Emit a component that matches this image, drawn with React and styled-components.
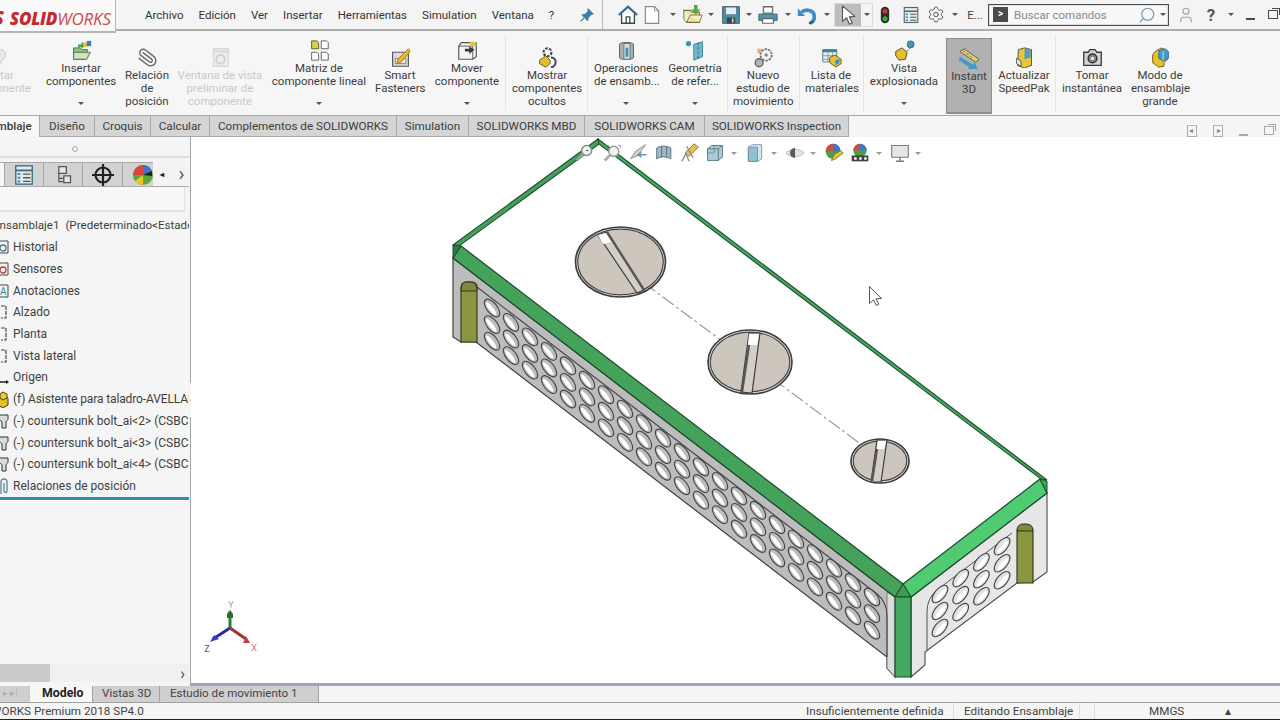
import React from 'react'
import styled, { createGlobalStyle } from 'styled-components'
import { Settings, Search, Paperclip, User } from 'lucide-react'

const GlobalStyle = createGlobalStyle`
  html, body {
    margin: 0;
    width: 1280px;
    height: 720px;
    overflow: hidden;
    background: #f5f5f5;
  }
  body {
    font-family: Roboto, "Liberation Sans", sans-serif;
    color: #3a3a3a;
  }
`

const Page = styled.div`
  width: 1280px;
  height: 720px;
  display: flex;
  flex-direction: column;
  overflow: hidden;
`

/* ---------- icons ---------- */

const Svg = ({ size = 24, children }) => (
  <svg width={size} height={size} viewBox="0 0 24 24" fill="none">{children}</svg>
)

const HomeIcon = () => (
  <Svg>
    <path d="M2 12 12 3l10 9" stroke="#2f6f8c" strokeWidth="2.4" />
    <path d="M5 11v10h14V11" stroke="#3a4a50" strokeWidth="1.5" fill="#fff" />
    <path d="M10 21v-7h4v7" stroke="#3a4a50" strokeWidth="1.4" />
  </Svg>
)
const DocIcon = () => (
  <Svg>
    <path d="M4 2h11l5 5v15H4z" fill="#fff" stroke="#8a8a8a" strokeWidth="1.4" />
    <path d="M15 2v5h5" stroke="#8a8a8a" />
  </Svg>
)
const OpenIcon = () => (
  <Svg>
    <path d="M2 7h7l2 2h8v11H5z" fill="#f0e2a6" stroke="#77704a" strokeWidth="1.2" />
    <path d="M2 7v10l3 3 4-8h13l-3 8" fill="#f7eec4" stroke="#77704a" />
    <path d="M13 1h4v5h3l-5 6-5-6h3z" fill="#57a845" />
  </Svg>
)
const SaveIcon = () => (
  <Svg>
    <path d="M2 2h20v20H2z" fill="#4f8ea3" stroke="#3f5f6c" strokeWidth="1.2" />
    <path d="M6 3h12v8H6z" fill="#e8eef0" />
    <path d="M7 15h10v7H7z" fill="#39474d" />
    <path d="M13 16h2v5h-2z" fill="#cfd8dc" />
  </Svg>
)
const PrintIcon = () => (
  <Svg>
    <path d="M7 3h10v7H7z" fill="#fff" stroke="#6a6a6a" strokeWidth="1.4" />
    <path d="M2 11h20v7H2z" fill="#4f97ad" stroke="#3f6070" />
    <path d="M6 16h12v5H6z" fill="#fff" stroke="#6a6a6a" strokeWidth="1.3" />
  </Svg>
)
const UndoIcon = () => (
  <Svg>
    <path d="M2 5v8h8z" fill="#3c8fc0" />
    <path d="M6 9c4-4 14-3 14 5 0 3-2 6-5 7" stroke="#3c8fc0" strokeWidth="4" />
    <path d="M14 21c2 0 4-1 5-3" stroke="#2b4f63" strokeWidth="1.4" />
  </Svg>
)
const ArrowIcon = ({ size = 22 }) => (
  <Svg size={size}>
    <path d="M6 2v17l4.5-4 3 7 3-1.3-3-6.7 6-.5z" fill="#fff" stroke="#555" strokeWidth="1.2" strokeLinejoin="round" />
  </Svg>
)
const TrafficIcon = () => (
  <svg width="10" height="20" viewBox="0 0 12 24">
    <rect x="1" y="2" width="10" height="20" rx="5" fill="#2a2a2a" />
    <circle cx="6" cy="7.5" r="3" fill="#d3302a" />
    <circle cx="6" cy="16.5" r="3" fill="#3eaa3a" />
  </svg>
)
const ListBoxIcon = ({ size = 20, color = '#4c6a74' }) => (
  <Svg size={size}>
    <rect x="3" y="2" width="18" height="20" fill="#e4e8ea" stroke={color} strokeWidth="1.5" />
    <path d="M3 7h18" stroke={color} strokeWidth="2" />
    <path d="M11 11h8M11 15h8M11 19h8" stroke="#555" strokeWidth="1.4" />
    <path d="M5 11h3M5 15h3M5 19h3" stroke="#3a93b8" strokeWidth="2.2" />
  </Svg>
)

const EditIcon = () => (
  <Svg>
    <path d="M6 20c-3-6 0-17 7-17 6 0 7 7 4 10-2 2-3 2-4 5s-5 5-7 2z" fill="#ececec" stroke="#d2d2d2" strokeWidth="1.5" />
    <path d="M9 10c1-3 5-3 5 0" stroke="#d8d8d8" strokeWidth="1.5" />
  </Svg>
)
const InsertIcon = () => (
  <Svg>
    <path d="M3 9h7l2 2h7l-3 11H3z" fill="#8fc48a" stroke="#44683f" />
    <path d="M3 14 22 14l-4 8H3z" fill="#cfe3bf" stroke="#44683f" />
    <path d="M8 9V5h4V2l5 4-5 4V8" fill="#46a24a" />
    <path d="M14 3h5v5h-5z" fill="#e3c23c" />
    <path d="M18 1h5v6h-5z" fill="#3d7fb1" />
  </Svg>
)
const ClipIcon = styled(Paperclip).attrs({ size: 24, color: '#6b6b6b', strokeWidth: 1.7 })`
  transform: scaleX(-1) rotate(8deg);
`
const PreviewIcon = () => (
  <Svg>
    <path d="M4 2h17v20H4z" fill="#ededed" stroke="#dadada" strokeWidth="1.5" />
    <path d="M4 5h17" stroke="#d4d4d4" strokeWidth="2" />
    <circle cx="12" cy="14" r="5" stroke="#cfcfcf" strokeWidth="2" />
  </Svg>
)
const PatternIcon = () => (
  <Svg>
    <path d="M3 1h6l2 2v7H3z" fill="#d9d24a" stroke="#4f4f2a" />
    <path d="M14 1h6l2 2v7h-8z" fill="#fff" stroke="#555" />
    <path d="M3 14h6l2 2v7H3z" fill="#fff" stroke="#555" />
    <path d="M14 14h6l2 2v7h-8z" fill="#fff" stroke="#555" />
  </Svg>
)
const FastenerIcon = () => (
  <Svg>
    <path d="M3 6h18v16H3z" fill="#ddd" stroke="#555" strokeWidth="1.3" />
    <path d="M6 19h12v-6H6z" fill="#f4f4f4" stroke="#777" />
    <path d="M21 2 9 14l-1 5 5-2L23 5z" fill="#eab92e" stroke="#94721a" />
  </Svg>
)
const MoveIcon = () => (
  <Svg>
    <path d="M5 3h17v16l-4 3H2V7z" fill="#f4f4f4" stroke="#555" strokeWidth="1.3" />
    <path d="M2 7h16v15" stroke="#555" />
    <path d="M9 10h5V7l6 4-6 5v-3H9z" fill="#3a3a3a" />
    <path d="M15 2h7v5h-7z" fill="#e9c23a" />
  </Svg>
)
const HiddenIcon = () => (
  <Svg>
    <circle cx="12" cy="6" r="4.5" stroke="#444" strokeWidth="2.4" strokeDasharray="3 1.5" />
    <path d="M3 15l7-5 5 5v4l-5 4-7-4z" fill="#e4bb30" stroke="#6a5311" />
    <path d="M16 12c4 0 6 3 5 7s-4 4-5 4" stroke="#444" strokeWidth="2.2" />
  </Svg>
)
const AssemblyOpsIcon = () => (
  <Svg>
    <path d="M4 5c0-3 16-3 16 0v15c0 3-16 3-16 0z" fill="#a8b0b4" stroke="#555" />
    <path d="M9 4h7v18H9z" fill="#d5dadc" stroke="#4d7d92" />
    <path d="M11 9h3v10h-3z" fill="#3d8db0" />
  </Svg>
)
const RefGeomIcon = () => (
  <Svg>
    <circle cx="4" cy="4" r="3" fill="#3b93b6" />
    <path d="M10 5l10-3v17l-10 4z" fill="#6fb9cf" stroke="#3a7f98" />
    <path d="M15 3v19" stroke="#2c5d70" strokeDasharray="3 2" />
  </Svg>
)
const StudyIcon = () => (
  <Svg>
    <circle cx="15" cy="9" r="6.5" fill="#f4f4f4" stroke="#777" strokeWidth="2" strokeDasharray="3 1" />
    <circle cx="15" cy="9" r="2" fill="#888" />
    <circle cx="7" cy="18" r="4.5" fill="#b4b4b4" stroke="#666" strokeWidth="1.6" />
    <path d="M5 2h5v5H5z" fill="#d3b36a" />
  </Svg>
)
const BomIcon = () => (
  <Svg>
    <path d="M2 3h16v14H2z" fill="#eef2f4" stroke="#4f6f7c" />
    <path d="M2 3h16v3H2z" fill="#3f7f9f" />
    <path d="M2 10h16M2 14h16M8 6v11M13 6v11" stroke="#7a8f99" />
    <path d="M10 12l6-3 7 5v5l-6 4-7-5z" fill="#e7c132" stroke="#6a5511" />
    <path d="M16 16l5-3v5l-4 3z" fill="#3d91c0" />
  </Svg>
)
const ExplodeIcon = () => (
  <Svg>
    <path d="M2 13l7-4 6 5-2 8-7 1-4-5z" fill="#e7bf2e" stroke="#4a3c10" />
    <circle cx="19" cy="5" r="4" fill="#4d94b4" stroke="#33667d" />
    <path d="M15 13l3-4" stroke="#555" strokeDasharray="2 1" />
  </Svg>
)
const InstantIcon = () => (
  <Svg>
    <path d="M1 4l5-3 17 12-4 3z" fill="#e6d46a" stroke="#555" />
    <path d="M5 3l2 2M9 6l2 2M13 9l2 2" stroke="#444" />
    <path d="M1 10l15 9 2-3 3 8H10l2-2L0 14z" fill="#3f9ac6" />
  </Svg>
)
const SpeedPakIcon = () => (
  <Svg>
    <path d="M5 3l7-2 8 2v18l-8 3-8-3z" fill="#e9c53a" stroke="#444" />
    <path d="M12 2l7 2v8l-7 2z" fill="#4d9cc4" />
    <path d="M3 13l5 3v6l-5-3z" fill="#fff" stroke="#444" />
    <path d="M5 17h1" stroke="#333" />
  </Svg>
)
const CameraIcon = () => (
  <Svg>
    <path d="M2 6h5l2-3h6l2 3h5v15H2z" fill="#d4d4d4" stroke="#3b3b3b" strokeWidth="1.5" />
    <circle cx="12" cy="13" r="5" fill="#888" stroke="#2f2f2f" strokeWidth="1.6" />
    <circle cx="12" cy="13" r="1.8" fill="#f0f0f0" />
  </Svg>
)
const LargeAsmIcon = () => (
  <Svg>
    <path d="M6 5l7-4 7 4v9l-4 4v4l-6 1-7-5V9z" fill="#e5c22f" stroke="#6a5612" />
    <path d="M10 4l7-2 4 3v8l-6 3-5-3z" fill="#4a9cc6" stroke="#2f6d8a" />
    <path d="M15 5v10" stroke="#c9e3ef" />
  </Svg>
)

const TreeIcon = styled.svg`
  width: 12px;
  height: 18px;
  flex: none;
`
const TreeBox = ({ color = '#4d7a88', letter }) => (
  <TreeIcon viewBox="0 0 12 18">
    <path d="M-2 3h10v12H-2z" fill="#f2f2f2" stroke="#4a4a4a" />
    {letter
      ? <text x="0" y="13" fontSize="10" fill={color}>{letter}</text>
      : <circle cx="3" cy="10" r="3" stroke={color} fill="none" strokeWidth="1.3" />}
  </TreeIcon>
)
const TreePlane = () => (
  <TreeIcon viewBox="0 0 12 18">
    <path d="M1 3h5v12H1" fill="none" stroke="#4a4a4a" strokeWidth="1.2" strokeDasharray="4 1" />
  </TreeIcon>
)
const TreeOrigin = () => (
  <TreeIcon viewBox="0 0 12 18">
    <path d="M0 14h7" stroke="#111" strokeWidth="1.4" />
    <path d="M6 12l3 2-3 2z" fill="#111" />
  </TreeIcon>
)
const TreeBlocks = () => (
  <TreeIcon viewBox="0 0 12 18">
    <path d="M-2 8l5-3 5 3v7l-5 3-5-3z" fill="#e3bd2c" stroke="#4a3c10" />
    <path d="M3 2l4 2v4l-4 2-3-2V4z" fill="#ecc93a" stroke="#4a3c10" />
  </TreeIcon>
)
const TreeBolt = () => (
  <TreeIcon viewBox="0 0 12 18">
    <path d="M-3 3h11v4c0 1-2 2-2 3v6H2v-6C2 9 0 8-3 7z" fill="#dcdcdc" stroke="#333" />
  </TreeIcon>
)
const TreeClip = () => (
  <TreeIcon viewBox="0 0 12 18">
    <path d="M1 17V5c0-4 6-4 6 0v9c0 2-3 2-3 0V6" fill="none" stroke="#5d8fa6" strokeWidth="1.4" />
  </TreeIcon>
)

const HudZoom = () => (
  <Svg size={20}>
    <circle cx="14" cy="9" r="6" stroke="#8a8a8a" strokeWidth="1.8" fill="#eef3f4" />
    <path d="M10 13 2 21" stroke="#8aa39b" strokeWidth="3.4" />
    <path d="M13 9h3" stroke="#666" strokeWidth="1.5" />
  </Svg>
)
const HudArea = () => (
  <Svg size={20}>
    <circle cx="13" cy="10" r="6" stroke="#9a9a9a" strokeWidth="1.8" fill="#f1f4f5" />
    <path d="M9 14 2 21" stroke="#a4b2ad" strokeWidth="3.4" />
    <path d="M3 3h4M18 3h3v3" stroke="#888" />
  </Svg>
)
const HudPrev = () => (
  <Svg size={20}>
    <path d="M21 2 9 10l-6 9 9-4z" fill="#cfd4d2" stroke="#888" />
    <path d="M22 14H12l4-3M12 14l4 3" stroke="#5a97b5" strokeWidth="1.7" />
  </Svg>
)
const HudSection = () => (
  <Svg size={20}>
    <path d="M2 6c4-3 12-3 17 0v13c-5-3-13-3-17 0z" fill="#9fb8c1" stroke="#4d6670" />
    <path d="M8 4v13M14 4v13" stroke="#4d6670" />
  </Svg>
)
const HudPencil = () => (
  <Svg size={20}>
    <path d="M17 1l5 4-11 11-5-4z" fill="#e4c24a" stroke="#7b6a2a" />
    <path d="M2 22l5-9 4 9M8 4l8 14" stroke="#8a8a8a" strokeWidth="1.5" />
  </Svg>
)
const HudCube = () => (
  <Svg size={20}>
    <path d="M3 7l5-4h13v14l-5 4H3z" fill="#a9cad6" stroke="#50707c" />
    <path d="M3 7h13v14M16 7l5-4" stroke="#50707c" />
    <path d="M11 3v9H3" stroke="#50707c" strokeDasharray="2 1" />
  </Svg>
)
const HudDisplay = () => (
  <Svg size={20}>
    <path d="M4 5l5-3h11v17l-5 3H4z" fill="#d6e8ee" stroke="#6a8c98" />
    <path d="M4 5h11v17H4z" fill="#8fc0d1" stroke="#6a8c98" />
  </Svg>
)
const HudEye = () => (
  <Svg size={20}>
    <path d="M1 12c5-6 17-6 22 0-5 6-17 6-22 0z" fill="#e2e2e2" stroke="#b5b5b5" />
    <path d="M12 6a6 6 0 0 0 0 12z" fill="#5a5a5a" />
  </Svg>
)
const HudBall = () => (
  <Svg size={20}>
    <circle cx="11" cy="10" r="9" fill="#4aa04a" />
    <path d="M11 10V1a9 9 0 0 0-9 9z" fill="#d14c42" />
    <path d="M11 10V1a9 9 0 0 1 9 9z" fill="#3d75c8" />
    <path d="M9 21l3-7 8-5 3 3-9 7z" fill="#e5c33a" stroke="#7b6a2a" />
  </Svg>
)
const HudScene = () => (
  <Svg size={20}>
    <circle cx="12" cy="9" r="8" fill="#4aa04a" />
    <path d="M12 9V1a8 8 0 0 0-8 8z" fill="#d14c42" />
    <path d="M12 9V1a8 8 0 0 1 8 8z" fill="#3d75c8" />
    <path d="M2 15h20v7H2z" fill="#3f3f3f" />
    <path d="M5 17h3v3H5zM11 17h3v3h-3zM17 17h3v3h-3z" fill="#fff" />
  </Svg>
)
const HudMonitor = () => (
  <Svg size={20}>
    <path d="M2 3h20v14H2z" fill="#e6e6e6" stroke="#7b7b7b" strokeWidth="1.3" />
    <path d="M12 17v4M7 22h10" stroke="#7b7b7b" strokeWidth="1.8" />
  </Svg>
)

const ColorBallIcon = () => (
  <svg width="22" height="22" viewBox="0 0 22 22">
    <circle cx="11" cy="11" r="10" fill="#5aa53c" />
    <path d="M11 11V1a10 10 0 0 0-10 10z" fill="#d9453a" />
    <path d="M11 11V1a10 10 0 0 1 9 6z" fill="#3f74c6" />
    <path d="M11 11 3 17a10 10 0 0 0 8 4z" fill="#e8c52f" />
    <path d="M11 11l9-4v5z" fill="#222" />
  </svg>
)
const TreeTabIcon = () => (
  <Svg size={20}>
    <path d="M7 2h9v8H7zM13 13h8v8h-8z" stroke="#555" strokeWidth="1.5" fill="#e8e8e8" />
    <path d="M7 10v10h6M7 16h6" stroke="#555" strokeWidth="1.5" />
  </Svg>
)
const CrosshairIcon = () => (
  <Svg>
    <circle cx="12" cy="12" r="7.5" stroke="#222" strokeWidth="2.2" />
    <path d="M12 1v22M1 12h22" stroke="#222" strokeWidth="2.2" />
  </Svg>
)

/* ---------- title bar ---------- */

const TitleBar = styled.header`
  display: flex;
  align-items: center;
  height: 29px;
  flex: none;
  border-bottom: 2px solid #adadad;
  background: #f4f4f4;
  position: relative;
  z-index: 2;
`
const Logo = styled.div`
  width: 116px;
  height: 33px;
  margin-bottom: -4px;
  box-sizing: border-box;
  flex: none;
  padding: 7px 0 0 0;
  background: #fafafa;
  border-right: 1px solid #b5b5b5;
  border-bottom: 2px solid #b5b5b5;
  white-space: nowrap;
  overflow: hidden;
  font-family: "Open Sans", sans-serif;
  font-size: 17px;
  font-style: italic;
  color: #c5282f;
  letter-spacing: -0.2px;
  b { font-weight: 800; margin-left: 6px; }
  span { font-weight: 400; color: #cf4a4f; }
  i { font-weight: 800; font-size: 20px; margin-left: -7px; line-height: 0; }
`
const Menu = styled.nav`
  display: flex;
  gap: 15px;
  margin-left: 29px;
  font-size: 11.5px;
  color: #333;
  white-space: nowrap;
`
const Pin = styled.svg`
  width: 14px;
  height: 14px;
  margin-left: 26px;
`
const Toolbar = styled.div`
  display: flex;
  align-items: center;
  margin-left: auto;
  width: 678px;
  height: 29px;
  box-sizing: border-box;
  border-left: 1px solid #b9b9b9;
`
const ToolBtn = styled.div`
  width: ${p => p.$w}px;
  margin-left: ${p => p.$ml}px;
  flex: none;
  display: flex;
  justify-content: center;
  align-items: center;
  svg { flex: none; max-width: ${p => p.$w}px; }
`
const Caret = styled.i`
  width: 0;
  height: 0;
  flex: none;
  margin-left: ${p => p.$ml}px;
  margin-right: 1px;
  border-left: 3px solid transparent;
  border-right: 3px solid transparent;
  border-top: 3px solid ${p => p.$color || '#555'};
`
const SelectGroup = styled.div`
  display: flex;
  align-items: center;
  height: 24px;
  width: 39px;
  margin-left: 3px;
  flex: none;
  border: 1px solid #dcdcdc;
  box-sizing: border-box;
`
const SelectActive = styled.div`
  width: 26px;
  height: 100%;
  background: #bdbdbd;
  display: flex;
  align-items: center;
  justify-content: center;
`
const SmallLabel = styled.span`
  font-size: 11.5px;
  color: #444;
`
const SearchBox = styled.div`
  width: 181px;
  height: 22px;
  margin-left: 5px;
  flex: none;
  box-sizing: border-box;
  border: 1px solid #4d4d4d;
  box-shadow: inset 0 0 0 1px #ddd;
  background: #f8f8f8;
  display: flex;
  align-items: center;
  padding: 0 1px 0 3px;
  font-size: 11.5px;
  color: #8a8a8a;
`
const PromptIcon = styled.span`
  width: 15px;
  height: 15px;
  background: #4b4b4b;
  color: #fff;
  font-size: 10px;
  font-weight: 700;
  line-height: 14px;
  text-align: center;
  margin-right: 6px;
  margin-left: 1px;
`
const HelpMark = styled.span`
  font-size: 17px;
  font-weight: 700;
  color: #555;
`
const MinBar = styled.span`
  width: 9px;
  height: 2px;
  margin-top: 8px;
  background: ${p => p.$color || '#4a4a4a'};
`
const Restore = styled.span`
  width: 8px;
  height: 7px;
  border: 1px solid ${p => p.$color || '#4a4a4a'};
  box-shadow: 2px -2px 0 -1px #f4f4f4, 3px -3px 0 -1px ${p => p.$color || '#4a4a4a'};
`

/* ---------- ribbon ---------- */

const RibbonBand = styled.div`
  flex: none;
  height: 85px;
  background: #f6f6f6;
  border-bottom: 1px solid #a8a8a8;
  box-sizing: border-box;
`
const Ribbon = styled.section`
  display: flex;
  height: 84px;
  margin-left: -35px;
  font-size: 11.5px;
  line-height: 13px;
  color: #3c3c3c;
`
const RibbonBtn = styled.div`
  width: ${p => p.$w}px;
  margin-left: ${p => p.$ml || 0}px;
  flex: none;
  box-sizing: border-box;
  text-align: center;
  padding-top: ${p => (p.$drop ? 6 : 13)}px;
  color: ${p => (p.$off ? '#c9c9c9' : 'inherit')};
  white-space: nowrap;
  ${p => p.$active && `
    margin-top: 7px;
    height: 76px;
    padding-top: 6px;
    background: #b1b1b1;
    border: 1px solid #8e8e8e;
    border-bottom-width: 2px;
  `}
`
const RibbonIcon = styled.div`
  height: 25px;
  padding-bottom: 1px;
  box-sizing: border-box;
  display: flex;
  justify-content: center;
  align-items: flex-end;
  svg { flex: none; width: 21px; height: 21px; }
`
const DropMark = styled.div`
  display: flex;
  justify-content: center;
  margin-top: 14px;
`
const RibbonSep = styled.div`
  width: 1px;
  height: 76px;
  margin: 4px 0 0 ${p => p.$ml}px;
  background: #e6e6e6;
  flex: none;
`

const ribbon = [
  { icon: <EditIcon />, lines: ['Editar', 'componente'], w: 68, off: true },
  { icon: <InsertIcon />, lines: ['Insertar', 'componentes'], w: 70, ml: 13, drop: true },
  { icon: <ClipIcon />, lines: ['Relación', 'de', 'posición'], w: 44, ml: 9 },
  { icon: <PreviewIcon />, lines: ['Ventana de vista', 'preliminar de', 'componente'], w: 88, ml: 7, off: true },
  { icon: <PatternIcon />, lines: ['Matriz de', 'componente lineal'], w: 96, ml: 7, drop: true },
  { icon: <FastenerIcon />, lines: ['Smart', 'Fasteners'], w: 50, ml: 8 },
  { icon: <MoveIcon />, lines: ['Mover', 'componente'], w: 66, ml: 9, drop: true },
  { sep: 5 },
  { icon: <HiddenIcon />, lines: ['Mostrar', 'componentes', 'ocultos'], w: 70, ml: 6 },
  { sep: 5 },
  { icon: <AssemblyOpsIcon />, lines: ['Operaciones', 'de ensamb...'], w: 64, ml: 6, drop: true },
  { icon: <RefGeomIcon />, lines: ['Geometría', 'de refer...'], w: 54, ml: 10, drop: true },
  { sep: 5 },
  { icon: <StudyIcon />, lines: ['Nuevo', 'estudio de', 'movimiento'], w: 60, ml: 5 },
  { sep: 6 },
  { icon: <BomIcon />, lines: ['Lista de', 'materiales'], w: 52, ml: 5 },
  { sep: 6 },
  { icon: <ExplodeIcon />, lines: ['Vista', 'explosionada'], w: 70, ml: 5, drop: true },
  { icon: <InstantIcon />, lines: ['Instant', '3D'], w: 46, ml: 7, active: true },
  { icon: <SpeedPakIcon />, lines: ['Actualizar', 'SpeedPak'], w: 52, ml: 6 },
  { sep: 5 },
  { icon: <CameraIcon />, lines: ['Tomar', 'instantánea'], w: 62, ml: 5 },
  { icon: <LargeAsmIcon />, lines: ['Modo de', 'ensamblaje', 'grande'], w: 58, ml: 8 },
]

/* ---------- command tabs ---------- */

const TabRow = styled.div`
  display: flex;
  align-items: stretch;
  height: 21px;
  flex: none;
  background: #f5f5f5;
  font-size: 11.7px;
  overflow: hidden;
`
const Tab = styled.div`
  width: ${p => p.$w}px;
  margin-left: ${p => p.$ml || 0}px;
  flex: none;
  box-sizing: border-box;
  text-align: center;
  line-height: 20px;
  color: #3c3c3c;
  white-space: nowrap;
  background: ${p => (p.$active ? '#f8f8f8' : '#d5d5d5')};
  border-right: 1px solid #a9a9a9;
  border-bottom: ${p => (p.$active ? 'none' : '1px solid #a9a9a9')};
  font-weight: ${p => (p.$active ? 500 : 400)};
`
const WindowBtns = styled.div`
  margin-left: auto;
  display: flex;
  align-items: center;
  gap: 16px;
  padding-right: 6px;
  margin-top: 8px;
  height: 13px;
`
const PageGlyph = styled.span`
  width: 10px;
  height: 12px;
  box-sizing: border-box;
  border: 1px solid #b0b0b0;
  color: #8a8a8a;
  font-size: 8px;
  line-height: 10px;
  text-align: ${p => p.$side};
  padding: 0 1px;
`

const tabs = [
  ['Ensamblaje', 76, true, -36],
  ['Diseño', 55],
  ['Croquis', 56],
  ['Calcular', 59],
  ['Complementos de SOLIDWORKS', 187],
  ['Simulation', 72],
  ['SOLIDWORKS MBD', 116],
  ['SOLIDWORKS CAM', 120],
  ['SOLIDWORKS Inspection', 144],
]

/* ---------- main ---------- */

const Main = styled.main`
  flex: none;
  height: 549px;
  display: flex;
`
const Sidebar = styled.aside`
  width: 191px;
  flex: none;
  box-sizing: border-box;
  background: #f5f5f5;
  border-right: 1px solid #a5a5a5;
  display: flex;
  flex-direction: column;
  position: relative;
  font-size: 12px;
`
const GripStrip = styled.div`
  height: 21px;
  flex: none;
  box-sizing: border-box;
  padding: 5px 0 0 72px;
  border-bottom: 2px solid #dedede;
  display: flex;
  align-items: center;
  span {
    width: 6px;
    height: 6px;
    border: 1px solid #a8a8a8;
    border-radius: 50%;
    box-sizing: border-box;
  }
`
const PanelTabs = styled.div`
  display: flex;
  height: 25px;
  margin-top: 4px;
  flex: none;
  position: relative;
  width: 189px;
  background: #dadada;
  border-top: 1px solid #aaa;
  border-bottom: 1px solid #aaa;
  box-sizing: border-box;
`
const PanelTab = styled.div`
  width: ${p => p.$w}px;
  flex: none;
  display: flex;
  align-items: center;
  justify-content: center;
  box-sizing: border-box;
  background: ${p => (p.$active ? '#f7f7f7' : '#d2d2d2')};
  border-right: 1px solid #a5a5a5;
`
const TabScroller = styled.div`
  position: absolute;
  left: 153px;
  top: -1px;
  width: 36px;
  height: 24px;
  display: flex;
  align-items: center;
  background: #f3f3f3;
  color: #555;
  span { width: 18px; font-size: 20px; line-height: 20px; padding-left: 3px; text-align: center; box-sizing: border-box; }
  b { font-size: 8px; color: #222; width: 18px; text-align: center; }
`
const FilterBox = styled.div`
  height: 25px;
  width: 185px;
  flex: none;
  box-sizing: border-box;
  background: #f8f8f8;
  border-right: 1px solid #e2e2e2;
  border-bottom: 2px solid #e2e2e2;
`
const Tree = styled.div`
  flex: 1;
  width: 189px;
  padding-top: 1.5px;
  overflow: hidden;
`
const RootRow = styled.div`
  height: 23px;
  line-height: 23px;
  margin-left: -7px;
  width: 196px;
  overflow: hidden;
  white-space: nowrap;
  color: #3f3f3f;
  font-size: 11.6px;
  word-spacing: 3px;
`
const TreeRow = styled.div`
  height: 21.7px;
  display: flex;
  align-items: center;
  gap: 1px;
  white-space: nowrap;
  color: #3f3f3f;
`
const RowLabel = styled.span`
  overflow: hidden;
  flex: 1;
  letter-spacing: ${p => (p.$tight ? '-0.12px' : 'normal')};
`
const BlueRule = styled.div`
  height: 3px;
  width: 189px;
  background: #2f8db8;
`
const Flyout = styled.div`
  position: absolute;
  left: 190px;
  top: 245px;
  width: 8px;
  height: 36px;
  box-sizing: border-box;
  background: #f5f5f5;
  border: 1px solid #b5b5b5;
  border-left: none;
  display: flex;
  align-items: center;
  color: #aaa;
  font-size: 8px;
`
const HScroll = styled.div`
  height: 18px;
  width: 189px;
  margin-bottom: 4px;
  flex: none;
  display: flex;
  justify-content: space-between;
  align-items: center;
  background: #f0f0f0;
  color: #444;
  font-size: 16px;
  padding-right: 4px;
  box-sizing: border-box;
  i { width: 50px; height: 100%; background: #cbcbcb; }
`
const Viewport = styled.div`
  flex: 1;
  position: relative;
  overflow: hidden;
  background: #fff;
  border-bottom: 3px solid #a3a3be;
  box-sizing: border-box;
`
const ModelCanvas = styled.svg`
  position: absolute;
  inset: 0;
  width: 1089px;
  height: 546px;
`
const HeadsUp = styled.div`
  position: absolute;
  left: 384px;
  top: 4px;
  height: 24px;
  display: flex;
  align-items: center;
`

const Hole = ({ x, y, angle, fill }) => (
  <g transform={`translate(${x} ${y}) rotate(${angle})`}>
    <ellipse rx="10.5" ry="5.2" fill={fill} stroke="#454545" strokeWidth="1.1" />
    <ellipse cx="0" cy="1.1" rx="8" ry="2.1" fill="#fff" />
  </g>
)

const Screw = ({ cx, cy, rx, ry, slot, white, bar }) => (
  <g>
    <ellipse cx={cx} cy={cy} rx={rx} ry={ry} fill="#e8e8e8" stroke="#3f3f3f" strokeWidth="1.7" />
    <ellipse cx={cx} cy={cy} rx={rx - 2.2} ry={ry - 2.2} fill="#cdc6bc" stroke="#444" strokeWidth="1.2" />
    <polygon points={slot} fill="#d4cfc6" stroke="#3f3f3f" strokeWidth="1.2" />
    <polygon points={white} fill="#fff" />
    <path d={bar} stroke="#5a5650" strokeWidth="2.4" />
  </g>
)

const leftHoles = []
for (let c = 0; c < 21; c++) {
  for (let r = 0; r < 3; r++) {
    leftHoles.push({ x: 492 + c * 19, y: 308 + c * 14.45 + r * 16.6 })
  }
}
const rightHoles = []
for (let c = 0; c < 4; c++) {
  for (let r = 0; r < 3; r++) {
    rightHoles.push({ x: 940 + c * 20.7, y: 594 - c * 15.9 + r * 17 })
  }
}

const Model = () => (
  <ModelCanvas viewBox="191 137 1089 546">
    {/* left face */}
    <polygon points="453,258 895,597 895,677 887,668 887,657 476,342 461,342 453,337" fill="#bcbcbc" stroke="#3f3f3f" strokeWidth="1.2" />
    <polygon points="887,592 895,597 895,677 887,668" fill="#dcdcdc" stroke="#6a6a6a" strokeWidth="0.8" />
    <path d="M477 287 877 594q10 8 10 22V657" fill="none" stroke="#444" strokeWidth="1.1" />
    <path d="M477 342V287q0-5-6-5h-5q-5 0-5 6V342z" fill="#8c9640" stroke="#2f3218" strokeWidth="1.1" />
    <path d="M477 291q0-9-6-9h-5q-5 0-5 9z" fill="#7d8a3c" stroke="#2f3218" strokeWidth="1" />
    {leftHoles.map(h => <Hole key={`${h.x}-${h.y}`} x={h.x} y={h.y} angle={52} fill="#bcbcbc" />)}

    {/* right face */}
    <polygon points="911,597 1047,493 1047,572 1033,582 1017,583 925,652 925,665 911,677" fill="#e6e6e6" stroke="#4a4a4a" strokeWidth="1.1" />
    <path d="M927 650V612q0-14 10-22L1012 533" fill="none" stroke="#555" strokeWidth="1" />
    <path d="M1033 583V532q0-6-6-6h-4q-6 0-6 6V583z" fill="#8c9640" stroke="#2f3218" strokeWidth="1.1" />
    <path d="M1033 531q0-7-7-7h-3q-6 0-6 7z" fill="#7d8a3c" stroke="#2f3218" strokeWidth="1" />
    {rightHoles.map(h => <Hole key={`${h.x}-${h.y}`} x={h.x} y={h.y} angle={-50} fill="#e2e2e2" />)}

    {/* top face + chamfers */}
    <polygon points="453,245 598,139 599,144 459,246" fill="#45a05c" stroke="#1f5230" strokeWidth="1.1" />
    <polygon points="598,139 1047,480 1041,479 599,144" fill="#45a862" stroke="#1f5230" strokeWidth="1.1" />
    <polygon points="461,246 903,584 895,597 453,258" fill="#44a25b" stroke="#1c4a2c" strokeWidth="1.2" />
    <polygon points="453,245 461,246 453,258" fill="#2f7a46" stroke="#1c4a2c" />
    <polygon points="903,584 1040,479 1047,493 911,597" fill="#50cb72" stroke="#1c4a2c" strokeWidth="1.2" />
    <polygon points="1040,479 1047,481 1047,493" fill="#3aa658" stroke="#1c4a2c" />
    <polygon points="903,584 911,597 895,597" fill="#3d9a55" stroke="#1c4a2c" />
    <polygon points="895,597 911,597 911,677 895,677" fill="#45a860" stroke="#1c4a2c" strokeWidth="1.2" />

    {/* mate line and screws */}
    <path d="M644 283 862 445" stroke="#9c9c9c" strokeWidth="1.2" strokeDasharray="14 3 3 3" />
    <Screw cx={620.5} cy={262} rx={45} ry={35} slot="598,235 607,232 644,290 637,293" white="598,235 606,233 611,242 603,244" bar="M607 232 644 290" />
    <Screw cx={750} cy={362} rx={42} ry={32} slot="749,333 760,333 752,393 741,392" white="749,334 759,334 757,345 748,345" bar="M749 345 742 392" />
    <Screw cx={880} cy={461} rx={29} ry={22} slot="877,440 887,440 881,482 871,482" white="878,441 886,441 884,449 877,449" bar="M877 449 872 481" />

    {/* cursor */}
    <path d="M869.5 286.5v17l4-3.6 2.8 5.6 2.6-1.3-2.8-5.4 5.4-.4z" fill="#fff" stroke="#555" strokeWidth="1" strokeLinejoin="round" />

    {/* triad */}
    <path d="M230 628V612" stroke="#2d7d33" strokeWidth="3" />
    <path d="M230 610l3 4v4h-6v-4z" fill="#2a6e2f" />
    <path d="M230 628l-17 11" stroke="#2a2aa5" strokeWidth="3" />
    <path d="M210 642l4-7 5 4z" fill="#3a3ac0" />
    <path d="M230 628l16 11" stroke="#a5303c" strokeWidth="3" />
    <path d="M250 643l-7 0 3-7z" fill="#c0404a" />
    <text x="231" y="608" fontSize="9" textAnchor="middle" fill="#86b486">Y</text>
    <text x="207" y="652" fontSize="9" textAnchor="middle" fill="#4a4ac0">Z</text>
    <text x="254" y="651" fontSize="9" textAnchor="middle" fill="#d0707a">X</text>
  </ModelCanvas>
)

/* ---------- bottom ---------- */

const BottomTabs = styled.div`
  height: 16px;
  flex: none;
  display: flex;
  background: #f5f5f5;
  font-size: 11.7px;
`
const NavArrows = styled.div`
  width: 30px;
  flex: none;
  background: #d0d0d0;
  color: #aaa;
  font-size: 9px;
  line-height: 15px;
  padding-left: 3px;
  box-sizing: border-box;
`
const ModelTab = styled.div`
  width: ${p => p.$w}px;
  padding-left: ${p => p.$pl}px;
  flex: none;
  box-sizing: border-box;
  line-height: 15px;
  white-space: nowrap;
  background: ${p => (p.$active ? '#f7f7f7' : '#cfcfcf')};
  font-weight: ${p => (p.$active ? 700 : 400)};
  font-size: ${p => (p.$active ? 12.3 : 11.6)}px;
  color: ${p => (p.$active ? '#222' : '#444')};
  border-right: 1px solid #a0a0a0;
`
const StatusBar = styled.footer`
  height: 18px;
  flex: none;
  box-sizing: border-box;
  display: flex;
  align-items: center;
  background: #f5f5f5;
  border-top: 1px solid #a0a0a0;
  border-bottom: 1px solid #222;
  font-size: 11.7px;
  color: #444;
  white-space: nowrap;
`
const StatusClip = styled.span`
  margin-right: auto;
  margin-left: -41px;
`
const StatusCell = styled.span`
  width: ${p => p.$w}px;
  height: 100%;
  line-height: 16px;
  flex: none;
  box-sizing: border-box;
  margin-left: ${p => p.$ml || 0}px;
  border-right: ${p => (p.$sep ? '1px solid #dedede' : 'none')};
`

function App() {
  return (
    <>
      <GlobalStyle />
      <Page>
        <TitleBar>
          <Logo><i>S</i><b>SOLID</b><span>WORKS</span></Logo>
          <Menu>
            {['Archivo', 'Edición', 'Ver', 'Insertar', 'Herramientas', 'Simulation', 'Ventana', '?'].map(m => (
              <span key={m}>{m}</span>
            ))}
          </Menu>
          <Pin viewBox="0 0 24 24">
            <path d="M14 2l8 8-3 1-5 5-1 5-9-9 5-1 5-5zM7 17l-6 6" fill="#3b7ea6" stroke="#3b7ea6" strokeWidth="2" />
          </Pin>
          <Toolbar>
            <ToolBtn $w={22} $ml={14}><HomeIcon /></ToolBtn>
            <ToolBtn $w={20} $ml={3}><DocIcon /></ToolBtn>
            <Caret $ml={8} />
            <ToolBtn $w={22} $ml={5}><OpenIcon /></ToolBtn>
            <Caret $ml={4} />
            <ToolBtn $w={20} $ml={6}><SaveIcon /></ToolBtn>
            <Caret $ml={5} />
            <ToolBtn $w={22} $ml={4}><PrintIcon /></ToolBtn>
            <Caret $ml={6} />
            <ToolBtn $w={22} $ml={4}><UndoIcon /></ToolBtn>
            <Caret $ml={6} />
            <SelectGroup>
              <SelectActive><ArrowIcon /></SelectActive>
              <Caret $ml={3} />
            </SelectGroup>
            <ToolBtn $w={12} $ml={6}><TrafficIcon /></ToolBtn>
            <ToolBtn $w={18} $ml={11}><ListBoxIcon /></ToolBtn>
            <ToolBtn $w={18} $ml={7}><Settings size={19} color="#555" strokeWidth={1.3} /></ToolBtn>
            <Caret $ml={7} />
            <ToolBtn $w={16} $ml={8}><SmallLabel>E...</SmallLabel></ToolBtn>
            <SearchBox>
              <PromptIcon>&gt;</PromptIcon>
              Buscar comandos
              <Search size={18} color="#6f9fb8" strokeWidth={1.6} style={{ marginLeft: 'auto', transform: 'scaleX(-1)' }} />
              <Caret $ml={4} />
            </SearchBox>
            <ToolBtn $w={18} $ml={8}><User size={20} color="#a0a0a0" strokeWidth={1.5} /></ToolBtn>
            <ToolBtn $w={14} $ml={9}><HelpMark>?</HelpMark></ToolBtn>
            <Caret $ml={10} />
            <ToolBtn $w={12} $ml={9}><MinBar /></ToolBtn>
            <ToolBtn $w={12} $ml={11}><Restore /></ToolBtn>
          </Toolbar>
        </TitleBar>

        <RibbonBand>
          <Ribbon>
            {ribbon.map((b, i) => (b.sep ? (
              <RibbonSep key={i} $ml={b.sep} />
            ) : (
              <RibbonBtn key={i} $w={b.w} $ml={b.ml} $drop={b.drop} $off={b.off} $active={b.active}>
                <RibbonIcon>{b.icon}</RibbonIcon>
                {b.lines.map(l => <div key={l}>{l}</div>)}
                {b.drop && <DropMark><Caret $ml={0} /></DropMark>}
              </RibbonBtn>
            )))}
          </Ribbon>
        </RibbonBand>

        <TabRow>
          {tabs.map(([label, w, active, ml]) => (
            <Tab key={label} $w={w} $active={active} $ml={ml}>{label}</Tab>
          ))}
          <WindowBtns>
            <PageGlyph $side="left">◂</PageGlyph>
            <PageGlyph $side="right">▸</PageGlyph>
            <MinBar $color="#a8a8a8" />
            <Restore $color="#a8a8a8" />
          </WindowBtns>
        </TabRow>

        <Main>
          <Sidebar>
            <GripStrip><span /></GripStrip>
            <PanelTabs>
              <PanelTab $w={5} $active />
              <PanelTab $w={39}><ListBoxIcon size={22} color="#3f6f80" /></PanelTab>
              <PanelTab $w={39}><TreeTabIcon /></PanelTab>
              <PanelTab $w={40}><CrosshairIcon /></PanelTab>
              <PanelTab $w={40}><ColorBallIcon /></PanelTab>
              <TabScroller><b>◂</b><span>›</span></TabScroller>
            </PanelTabs>
            <FilterBox />
            <Tree>
              <RootRow>Ensamblaje1 (Predeterminado&lt;Estado_de_visualización</RootRow>
              <TreeRow><TreeBox /><RowLabel>Historial</RowLabel></TreeRow>
              <TreeRow><TreeBox color="#b5413a" /><RowLabel>Sensores</RowLabel></TreeRow>
              <TreeRow><TreeBox color="#2f8b99" letter="A" /><RowLabel>Anotaciones</RowLabel></TreeRow>
              <TreeRow><TreePlane /><RowLabel>Alzado</RowLabel></TreeRow>
              <TreeRow><TreePlane /><RowLabel>Planta</RowLabel></TreeRow>
              <TreeRow><TreePlane /><RowLabel>Vista lateral</RowLabel></TreeRow>
              <TreeRow><TreeOrigin /><RowLabel>Origen</RowLabel></TreeRow>
              <TreeRow><TreeBlocks /><RowLabel $tight>(f) Asistente para taladro-AVELLAI</RowLabel></TreeRow>
              <TreeRow><TreeBolt /><RowLabel>(-) countersunk bolt_ai&lt;2&gt; (CSBC</RowLabel></TreeRow>
              <TreeRow><TreeBolt /><RowLabel>(-) countersunk bolt_ai&lt;3&gt; (CSBC</RowLabel></TreeRow>
              <TreeRow><TreeBolt /><RowLabel>(-) countersunk bolt_ai&lt;4&gt; (CSBC</RowLabel></TreeRow>
              <TreeRow><TreeClip /><RowLabel>Relaciones de posición</RowLabel></TreeRow>
              <BlueRule />
            </Tree>
            <Flyout>o</Flyout>
            <HScroll><i />›</HScroll>
          </Sidebar>

          <Viewport>
            <Model />
            <HeadsUp>
              <ToolBtn $w={20} $ml={0}><HudZoom /></ToolBtn>
              <ToolBtn $w={20} $ml={8}><HudArea /></ToolBtn>
              <ToolBtn $w={20} $ml={5}><HudPrev /></ToolBtn>
              <ToolBtn $w={20} $ml={7}><HudSection /></ToolBtn>
              <ToolBtn $w={20} $ml={5}><HudPencil /></ToolBtn>
              <ToolBtn $w={20} $ml={5}><HudCube /></ToolBtn>
              <Caret $ml={6} $color="#999" />
              <ToolBtn $w={20} $ml={7}><HudDisplay /></ToolBtn>
              <Caret $ml={6} $color="#999" />
              <ToolBtn $w={20} $ml={7}><HudEye /></ToolBtn>
              <Caret $ml={5} $color="#999" />
              <ToolBtn $w={20} $ml={7}><HudBall /></ToolBtn>
              <ToolBtn $w={20} $ml={6}><HudScene /></ToolBtn>
              <Caret $ml={6} $color="#999" />
              <ToolBtn $w={20} $ml={7}><HudMonitor /></ToolBtn>
              <Caret $ml={5} $color="#999" />
            </HeadsUp>
          </Viewport>
        </Main>

        <BottomTabs>
          <NavArrows>▸ ▸|</NavArrows>
          <ModelTab $w={63} $pl={12} $active>Modelo</ModelTab>
          <ModelTab $w={67} $pl={9}>Vistas 3D</ModelTab>
          <ModelTab $w={159} $pl={10}>Estudio de movimiento 1</ModelTab>
        </BottomTabs>

        <StatusBar>
          <StatusClip>SOLIDWORKS Premium 2018 SP4.0</StatusClip>
          <StatusCell $w={148} $sep>Insuficientemente definida</StatusCell>
          <StatusCell $w={116} $ml={10} $sep>Editando Ensamblaje</StatusCell>
          <StatusCell $w={15} $sep />
          <StatusCell $w={36} $ml={54}>MMGS</StatusCell>
          <StatusCell $w={55} $ml={40}>▴</StatusCell>
        </StatusBar>
      </Page>
    </>
  )
}

export default App
